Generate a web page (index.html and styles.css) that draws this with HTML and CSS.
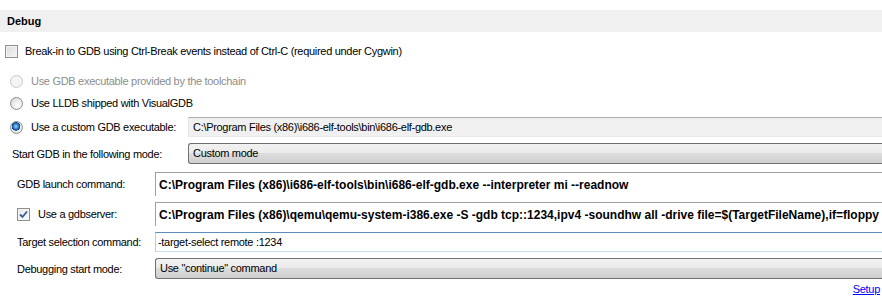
FILE: index.html
```html
<!DOCTYPE HTML>
<html>
<head>
    <meta charset="UTF-8" />
    <link rel="stylesheet" href="styles.css">
</head>

<body>
    <div class="section-head">Debug</div>

    <div class="check-row">
        <span class="checkbox"></span>
        <span>Break-in to GDB using Ctrl-Break events instead of Ctrl-C (required under Cygwin)</span>
    </div>

    <div class="radio-group">
        <div class="radio-row disabled">
            <span class="radio"></span>
            <span>Use GDB executable provided by the toolchain</span>
        </div>
        <div class="radio-row">
            <span class="radio"></span>
            <span>Use LLDB shipped with VisualGDB</span>
        </div>
        <div class="radio-row custom">
            <span class="radio checked"></span>
            <span class="radio-label">Use a custom GDB executable:</span>
            <div class="field readonly">C:\Program Files (x86)\i686-elf-tools\bin\i686-elf-gdb.exe</div>
        </div>
    </div>

    <div class="mode-row">
        <span class="mode-label">Start GDB in the following mode:</span>
        <div class="combo">Custom mode</div>
    </div>

    <div class="form-grid">
        <div class="form-row tall">
            <span class="form-label">GDB launch command:</span>
            <div class="field command">C:\Program Files (x86)\i686-elf-tools\bin\i686-elf-gdb.exe --interpreter mi --readnow</div>
        </div>
        <div class="form-row tall">
            <span class="form-label">
                <span class="checkbox checked">
                    <svg width="9" height="9" viewBox="0 0 9 9"><path d="M1 4.5 L3.5 7 L8 1.5" fill="none" stroke="#3a5a9c" stroke-width="1.8"/></svg>
                </span>
                Use a gdbserver:
            </span>
            <div class="field command">C:\Program Files (x86)\qemu\qemu-system-i386.exe -S -gdb tcp::1234,ipv4 -soundhw all -drive file=$(TargetFileName),if=floppy</div>
        </div>
        <div class="form-row">
            <span class="form-label">Target selection command:</span>
            <div class="field focused">-target-select remote :1234</div>
        </div>
        <div class="form-row">
            <span class="form-label">Debugging start mode:</span>
            <div class="combo">Use "continue" command</div>
        </div>
    </div>

    <div class="footer"><a href="#">Setup</a></div>
</body>

</html>
```

FILE: styles.css
```css
html, body {
    margin: 0;
    overflow: hidden;
}
body {
    font-family: "Liberation Sans", Arial, sans-serif;
    font-size: 11px;
    letter-spacing: -0.3px;
    color: #000000;
    background: #ffffff;
}

.section-head {
    margin-top: 10px;
    height: 22px;
    line-height: 22px;
    padding-left: 7px;
    background-color: #f0f0f0;
    font-weight: bold;
    font-size: 11px;
    letter-spacing: 0;
}

.checkbox {
    display: inline-flex;
    align-items: center;
    justify-content: center;
    width: 11px;
    height: 11px;
    border: 1px solid #8e8f8f;
    background: linear-gradient(135deg, #dcdcdc, #f6f6f6);
    box-shadow: inset 0 0 0 1px #f4f4f4;
    flex-shrink: 0;
}
.checkbox.checked {
    background: linear-gradient(135deg, #e6e6e6, #fbfbfb);
}

.check-row {
    display: flex;
    align-items: center;
    height: 22px;
    margin-top: 8px;
    padding-left: 5px;
}
.check-row .checkbox {
    margin-right: 7px;
}

.radio-group {
    margin-top: 8px;
    padding-left: 10px;
}
.radio-row {
    display: flex;
    align-items: center;
    height: 22px;
}
.radio-row.custom {
    height: 20px;
    margin-top: 3px;
}
.radio-row.disabled {
    color: #8d8d8d;
}
.radio {
    width: 11px;
    height: 11px;
    border: 1px solid #8e8f8f;
    border-radius: 50%;
    background: radial-gradient(circle at 60% 65%, #ffffff 0%, #e4e4e4 60%, #cfcfcf 100%);
    margin-right: 8px;
    flex-shrink: 0;
}
.radio-row.disabled .radio {
    border-color: #c9c9c9;
    background: #f4f4f4;
}
.radio.checked {
    background:
        radial-gradient(circle at 45% 40%, #9ed2f5 0%, #2a7dcb 30%, #0d3d80 45%, transparent 50%),
        radial-gradient(circle, #ffffff 0%, #e4e4e4 70%, #cfcfcf 100%);
}
.radio-label {
    width: 157px;
}

.field {
    flex: 1;
    white-space: nowrap;
    overflow: hidden;
    box-sizing: border-box;
}
.field.readonly {
    height: 20px;
    line-height: 18px;
    padding-left: 4px;
    background-color: #f0f0f0;
    border-top: 1px solid #abadb3;
    border-left: 1px solid #e2e3ea;
    border-bottom: 1px solid #e3e9ef;
}
.field.command {
    align-self: stretch;
    height: 24px;
    line-height: 24px;
    padding-left: 3px;
    font-weight: bold;
    font-size: 12px;
    letter-spacing: 0;
    border-top: 1px solid #a0a0a0;
    border-left: 1px solid #a0a0a0;
}
.field.focused {
    height: 20px;
    line-height: 18px;
    padding-left: 2px;
    border-top: 1px solid #5b8fb9;
    border-left: 1px solid #b5cfe7;
    border-bottom: 1px solid #c5e2f3;
}

.combo {
    flex: 1;
    height: 21px;
    line-height: 19px;
    box-sizing: border-box;
    padding-left: 4px;
    border: 1px solid #707070;
    border-right: none;
    border-radius: 3px 0 0 3px;
    background: linear-gradient(#f2f2f2 0%, #ebebeb 45%, #dddddd 50%, #cfcfcf 100%);
    white-space: nowrap;
}

.mode-row {
    display: flex;
    align-items: center;
    margin-top: 6px;
    padding-left: 12px;
}
.mode-label {
    width: 176px;
}

.form-grid {
    margin-top: 8px;
    padding-left: 17px;
    display: flex;
    flex-direction: column;
    gap: 6px;
}
.form-row {
    display: flex;
    align-items: center;
}
.form-row.tall {
    height: 24px;
}
.form-label {
    width: 138px;
    display: flex;
    align-items: center;
    flex-shrink: 0;
}
.form-label .checkbox {
    margin-right: 8px;
}

.footer {
    text-align: right;
    margin-top: 3px;
    margin-right: 2px;
    height: 14px;
    line-height: 14px;
}
.footer a {
    color: #0000ff;
}
```
